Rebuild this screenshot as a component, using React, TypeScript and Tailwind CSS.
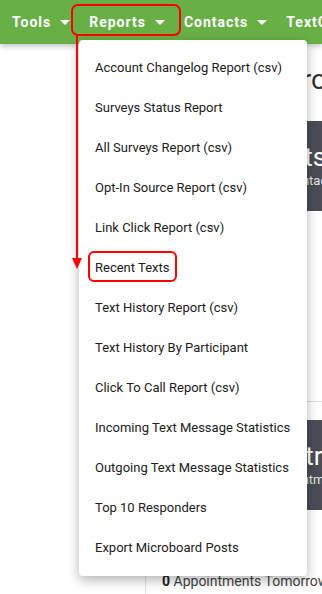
import React from "react";

const NAV_ITEMS = ["Tools", "Reports", "Contacts", "TextCaster"];

const REPORTS = [
  "Account Changelog Report (csv)",
  "Surveys Status Report",
  "All Surveys Report (csv)",
  "Opt-In Source Report (csv)",
  "Link Click Report (csv)",
  "Recent Texts",
  "Text History Report (csv)",
  "Text History By Participant",
  "Click To Call Report (csv)",
  "Incoming Text Message Statistics",
  "Outgoing Text Message Statistics",
  "Top 10 Responders",
  "Export Microboard Posts",
];

function Caret() {
  return (
    <svg width="10" height="5" viewBox="0 0 10 5" className="shrink-0">
      <path d="M0 0 L10 0 L5 5 Z" fill="white" />
    </svg>
  );
}

export default function App() {
  return (
    <div
      className="relative w-full h-[594px] overflow-hidden bg-white"
      style={{ fontFamily: "Roboto, 'Liberation Sans', sans-serif" }}
    >
      {/* top nav */}
      <nav className="relative z-10 h-[44px] bg-[#68b046] flex items-center pl-3 gap-[19px] shadow-[0_2px_6px_rgba(0,0,0,0.25)] whitespace-nowrap">
        {NAV_ITEMS.map((item) => (
          <div key={item} className="flex items-center gap-[9px] text-white font-bold text-[14px] tracking-[1px]">
            <span>{item}</span>
            <Caret />
          </div>
        ))}
      </nav>

      {/* page body */}
      <div className="flex h-[550px]">
        <aside className="w-[146px] shrink-0 border-r border-[#e3e3e3]" />
        <main className="flex-1 min-w-0 pl-4 overflow-hidden">
          <h1 className="mt-[18px] h-[36px] leading-[36px] pl-[30px] text-[28px] font-normal text-[#333] whitespace-nowrap">
            Your Microboard
          </h1>
          <div className="mt-[23px] h-[90px] w-[300px] bg-[#4a4d55] flex flex-col justify-center pl-[60px] whitespace-nowrap">
            <div className="text-[26px] leading-[30px] text-white">Contacts</div>
            <div className="text-[13px] leading-[18px] text-[#e5e5e5] pl-[64px]">Contacts</div>
          </div>
          <div className="h-[191px] border-b border-[#dcdcdc]" />
          <div className="mt-[18px] h-[90px] w-[300px] bg-[#4a4d55] flex flex-col justify-center pl-[106px] whitespace-nowrap">
            <div className="text-[26px] leading-[30px] text-white pl-[8px]">Entries</div>
            <div className="text-[13px] leading-[18px] text-[#e5e5e5]">Appointments</div>
          </div>
          <p className="mt-[61px] text-[14px] text-[#444] whitespace-nowrap">
            <span className="font-bold text-[#222]">0</span> Appointments Tomorrow
          </p>
        </main>
      </div>

      {/* reports dropdown */}
      <div className="absolute z-20 left-[79px] top-[40px] w-[228px] bg-white rounded-[4px] py-2 shadow-[0_4px_12px_rgba(0,0,0,0.3)]">
        {REPORTS.map((r) => (
          <div key={r} className="h-[40px] flex items-center pl-4 text-[13px] text-[#212121] whitespace-nowrap">
            {r}
          </div>
        ))}
      </div>

      {/* annotations */}
      <div className="absolute z-30 left-[71px] top-[4px] w-[110px] h-[32px] border-2 border-[#f00] rounded-[7px]" />
      <div className="absolute z-30 left-[88px] top-[251px] w-[89px] h-[31px] border-2 border-[#f00] rounded-[6px]" />
      <svg className="absolute z-30 left-[70px] top-[35px]" width="14" height="236" viewBox="0 0 14 236">
        <rect x="6" y="0" width="2" height="225" fill="#f00" />
        <path d="M2 223 L12 223 L7 234 Z" fill="#f00" />
      </svg>
    </div>
  );
}
